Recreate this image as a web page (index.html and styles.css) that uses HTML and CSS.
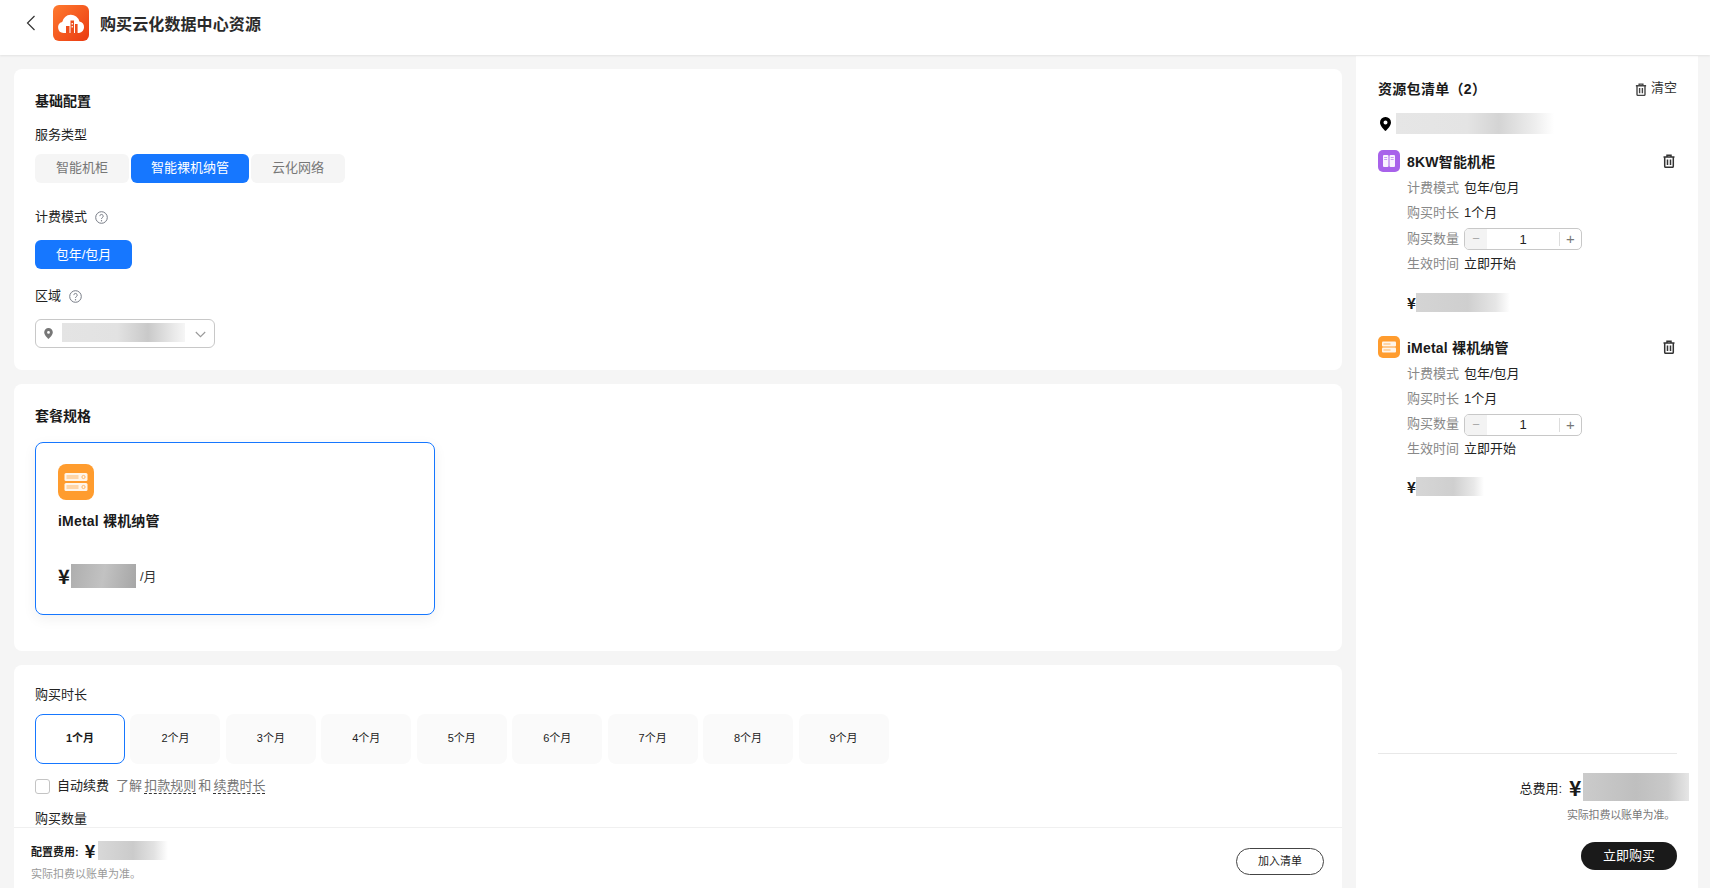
FILE: index.html
```html
<!DOCTYPE html>
<html lang="zh-CN">
<head>
  <meta charset="UTF-8" />
  <title>购买云化数据中心资源</title>
  <link rel="stylesheet" href="styles.css">
</head>
<body>
  <header class="top-bar">
    <svg class="back-icon" width="10" height="16" viewBox="0 0 10 16"><path d="M8.500 1 1.500 8l7 7" fill="none" stroke="#333" stroke-width="1.200"/></svg>
    <svg class="logo" width="36" height="36" viewBox="0 0 36 36">
      <defs>
        <linearGradient id="logoBg" x1="0" y1="0" x2="1" y2="1">
          <stop offset="0" stop-color="#ff7a2e"/>
          <stop offset="1" stop-color="#ea3a12"/>
        </linearGradient>
      </defs>
      <rect width="36" height="36" rx="6" fill="url(#logoBg)"/>
      <path d="M10.500 28a5.600 5.600 0 0 1-1.300-11 8.800 8.800 0 0 1 17.200-.6A5.900 5.900 0 0 1 26 28z" fill="#fff"/>
      <path d="M13 28v-7h3.500v7zM17.500 28V15.500h3.500V28zM22 28v-9h2.600v9z" fill="#ee4d1c"/>
      <path d="M18.600 18h1.300v1.500h-1.300zM18.600 21h1.300v1.500h-1.300z" fill="#fff"/>
    </svg>
    <h1 class="page-title">购买云化数据中心资源</h1>
  </header>

  <div class="page-body">
    <div class="main-col">
      <div class="main-scroll">
        <section class="card card-base">
          <h2 class="card-title">基础配置</h2>
          <div class="field-label label-service">服务类型</div>
          <div class="seg-group">
            <div class="seg seg-cabinet">智能机柜</div>
            <div class="seg seg-metal active">智能裸机纳管</div>
            <div class="seg seg-network">云化网络</div>
          </div>
          <div class="field-label label-billing">计费模式
            <svg class="help-icon" width="13" height="13" viewBox="0 0 13 13"><circle cx="6.500" cy="6.500" r="5.800" fill="none" stroke="#777c86"/><path d="M4.800 5.100a1.700 1.700 0 1 1 2.600 1.500c-.6.400-.9.700-.9 1.400" fill="none" stroke="#777c86"/><circle cx="6.500" cy="9.700" r=".7" fill="#777c86"/></svg>
          </div>
          <div class="billing-btn">包年/包月</div>
          <div class="field-label label-region">区域
            <svg class="help-icon" width="13" height="13" viewBox="0 0 13 13"><circle cx="6.500" cy="6.500" r="5.800" fill="none" stroke="#777c86"/><path d="M4.800 5.100a1.700 1.700 0 1 1 2.600 1.500c-.6.400-.9.700-.9 1.400" fill="none" stroke="#777c86"/><circle cx="6.500" cy="9.700" r=".7" fill="#777c86"/></svg>
          </div>
          <div class="region-select">
            <svg class="select-pin" width="9" height="11" viewBox="0 0 9 11"><path fill-rule="evenodd" d="M4.500 0a4.300 4.300 0 0 1 4.300 4.300c0 2.700-3 5.600-4.300 6.700C3.200 9.900.2 7 .2 4.300A4.300 4.300 0 0 1 4.500 0zm0 3a1.400 1.400 0 1 0 0 2.800 1.400 1.400 0 0 0 0-2.800z" fill="#777"/></svg>
            <div class="blur blur-region"></div>
            <svg class="select-arrow" width="11" height="7" viewBox="0 0 11 7"><path d="m.8 1 4.700 4.700L10.200 1" fill="none" stroke="#999" stroke-width="1.100"/></svg>
          </div>
        </section>

        <section class="card card-plan">
          <h2 class="card-title">套餐规格</h2>
          <div class="plan-item">
            <svg class="plan-icon" width="36" height="36" viewBox="0 0 36 36">
              <rect width="36" height="36" rx="8" fill="#ff9c2e"/>
              <rect x="6.500" y="9" width="23" height="8" rx="1.500" fill="#fff" fill-opacity=".9"/>
              <rect x="6.500" y="19" width="23" height="8" rx="1.500" fill="#fff" fill-opacity=".9"/>
              <path d="M8.500 12h12M8.500 14h12M8.500 22h12M8.500 24h12" stroke="#ffb565" stroke-width="1"/>
              <circle cx="25.500" cy="13" r="1.600" fill="none" stroke="#ffb565"/>
              <circle cx="25.500" cy="23" r="1.600" fill="none" stroke="#ffb565"/>
            </svg>
            <div class="plan-name">iMetal 裸机纳管</div>
            <div class="plan-price">
              <span class="yen yen-big">¥</span>
              <div class="blur blur-plan"></div>
              <span class="per-month">/月</span>
            </div>
          </div>
        </section>

        <section class="card card-duration">
          <div class="field-label">购买时长</div>
          <div class="month-list">
            <div class="month active">1个月</div>
            <div class="month">2个月</div>
            <div class="month">3个月</div>
            <div class="month">4个月</div>
            <div class="month">5个月</div>
            <div class="month">6个月</div>
            <div class="month">7个月</div>
            <div class="month">8个月</div>
            <div class="month">9个月</div>
          </div>
          <div class="renew-row">
            <span class="checkbox"></span>
            <span class="renew-text">自动续费</span>
            <span class="renew-tip">了解 <span class="dash-link">扣款规则</span> 和 <span class="dash-link">续费时长</span></span>
          </div>
          <div class="field-label label-qty">购买数量</div>
        </section>
      </div>

      <footer class="config-bar">
        <div>
          <div class="config-cost">
            <span class="config-label">配置费用:</span>
            <span class="yen yen-mid">¥</span>
            <div class="blur blur-config"></div>
          </div>
          <div class="config-note">实际扣费以账单为准。</div>
        </div>
        <div class="add-btn">加入清单</div>
      </footer>
    </div>

    <aside class="cart">
      <div class="cart-head">
        <span class="cart-title">资源包清单（2）</span>
        <span class="cart-clear">
          <svg class="trash" width="12" height="13" viewBox="0 0 12 14"><path d="M.5 3h11M4 3V1.200h4V3M1.700 3v9.300c0 .6.400 1 1 1h6.600c.6 0 1-.4 1-1V3M4.500 5.500v5.500M7.500 5.500v5.500" fill="none" stroke="#444" stroke-width="1.500"/></svg>
          <span class="clear-text">清空</span>
        </span>
      </div>
      <div class="cart-region">
        <svg width="11" height="14" viewBox="0 0 11 14"><path fill-rule="evenodd" d="M5.500 0A5.400 5.400 0 0 1 11 5.400C11 8.800 7.200 12.500 5.500 14 3.800 12.500 0 8.800 0 5.400A5.400 5.400 0 0 1 5.500 0zm0 3.500a2 2 0 1 0 0 4 2 2 0 0 0 0-4z" fill="#000"/></svg>
        <div class="blur blur-cart-region"></div>
      </div>

      <div class="cart-item">
        <div class="item-head">
          <svg width="22" height="22" viewBox="0 0 22 22">
            <rect width="22" height="22" rx="5" fill="#a862ea"/>
            <rect x="5" y="5" width="5.500" height="12" rx="1" fill="#fff" fill-opacity=".92"/>
            <rect x="11.500" y="5" width="5.500" height="12" rx="1" fill="#fff" fill-opacity=".92"/>
            <path d="M6.200 7.500h3M6.200 9.500h3M12.700 7.500h3M12.700 9.500h3" stroke="#c79bf2"/>
          </svg>
          <span class="item-name">8KW智能机柜</span>
          <svg class="item-del" width="12" height="14" viewBox="0 0 12 14"><path d="M.5 3h11M4 3V1.200h4V3M1.700 3v9.300c0 .6.400 1 1 1h6.600c.6 0 1-.4 1-1V3M4.500 5.500v5.500M7.500 5.500v5.500" fill="none" stroke="#333" stroke-width="1.500"/></svg>
        </div>
        <div class="item-row"><span class="item-key">计费模式</span><span>包年/包月</span></div>
        <div class="item-row"><span class="item-key">购买时长</span><span>1个月</span></div>
        <div class="item-row"><span class="item-key">购买数量</span>
          <div class="stepper"><span class="step-minus">−</span><span class="step-num">1</span><span class="step-plus">+</span></div>
        </div>
        <div class="item-row"><span class="item-key">生效时间</span><span>立即开始</span></div>
        <div class="item-price"><span class="yen yen-small">¥</span><div class="blur blur-item-a"></div></div>
      </div>

      <div class="cart-item">
        <div class="item-head">
          <svg width="22" height="22" viewBox="0 0 22 22">
            <rect width="22" height="22" rx="5" fill="#ff9c2e"/>
            <rect x="4" y="5.500" width="14" height="5" rx="1" fill="#fff" fill-opacity=".9"/>
            <rect x="4" y="11.500" width="14" height="5" rx="1" fill="#fff" fill-opacity=".9"/>
            <path d="M5.500 8h7M5.500 14h7" stroke="#ffb565"/>
          </svg>
          <span class="item-name">iMetal 裸机纳管</span>
          <svg class="item-del" width="12" height="14" viewBox="0 0 12 14"><path d="M.5 3h11M4 3V1.200h4V3M1.700 3v9.300c0 .6.400 1 1 1h6.600c.6 0 1-.4 1-1V3M4.500 5.500v5.500M7.500 5.500v5.500" fill="none" stroke="#333" stroke-width="1.500"/></svg>
        </div>
        <div class="item-row"><span class="item-key">计费模式</span><span>包年/包月</span></div>
        <div class="item-row"><span class="item-key">购买时长</span><span>1个月</span></div>
        <div class="item-row"><span class="item-key">购买数量</span>
          <div class="stepper"><span class="step-minus">−</span><span class="step-num">1</span><span class="step-plus">+</span></div>
        </div>
        <div class="item-row"><span class="item-key">生效时间</span><span>立即开始</span></div>
        <div class="item-price"><span class="yen yen-small">¥</span><div class="blur blur-item-b"></div></div>
      </div>

      <div class="cart-total">
        <div class="total-row">
          <span class="total-label">总费用:</span>
          <span class="yen yen-large">¥</span>
          <div class="blur blur-total"></div>
        </div>
        <div class="total-note">实际扣费以账单为准。</div>
        <div class="buy-btn">立即购买</div>
      </div>
    </aside>
  </div>
</body>
</html>
```

FILE: styles.css
```css
* {
  box-sizing: border-box;
}

html, body {
  height: 100%;
}

body {
  margin: 0;
  display: flex;
  flex-direction: column;
  overflow: hidden;
  background: #f5f5f5;
  color: #1a1a1a;
  font-family: "Liberation Sans", "Noto Sans CJK SC", sans-serif;
  font-size: 13px;
}

/* top bar */
.top-bar {
  flex: none;
  height: 55px;
  display: flex;
  align-items: center;
  padding: 0 0 9px 26px;
  background: white;
  box-shadow: 0 1px 2px rgba(0,0,0,0.08);
  position: relative;
}

.back-icon {
  margin-right: 17px;
}

.logo {
  margin-right: 11px;
}

.page-title {
  margin: 0;
  font-size: 16px;
  font-weight: 700;
  letter-spacing: .1px;
  color: #2a2a2a;
}

.page-body {
  flex: 1;
  min-height: 0;
  display: flex;
  padding-left: 14px;
}

/* left column */
.main-col {
  width: 1328px;
  display: flex;
  flex-direction: column;
}

.main-scroll {
  flex: 1;
  min-height: 0;
  overflow: hidden;
  padding-top: 14px;
}

.card {
  background: white;
  border-radius: 8px;
  padding: 22px 21px;
  margin-bottom: 14px;
}

.card-title {
  margin: 0;
  font-size: 14px;
  line-height: 20px;
  font-weight: 700;
}

.field-label {
  display: flex;
  align-items: center;
  line-height: 20px;
  color: #222;
}

.help-icon {
  margin-left: 8px;
}

.label-service {
  margin-top: 14px;
}

.seg-group {
  display: flex;
  gap: 2px;
  margin-top: 9px;
}

.seg {
  height: 29px;
  line-height: 28px;
  text-align: center;
  border-radius: 6px;
  background: #f5f5f5;
  color: #777;
}

.seg-cabinet, .seg-network {
  width: 94px;
}

.seg-metal {
  width: 118px;
}

.seg.active {
  background: #1677ff;
  color: white;
}

.label-billing {
  margin-top: 24px;
}

.billing-btn {
  width: 97px;
  height: 29px;
  line-height: 29px;
  margin-top: 13px;
  text-align: center;
  border-radius: 6px;
  background: #1677ff;
  color: white;
}

.label-region {
  margin-top: 17px;
}

.region-select {
  width: 180px;
  height: 29px;
  margin-top: 13px;
  display: flex;
  align-items: center;
  padding: 0 8px 2px 8px;
  border: 1px solid #c8c8c8;
  border-radius: 6px;
}

.select-pin {
  flex: none;
  margin: 2px 9px 0 0;
}

.select-arrow {
  flex: none;
  margin: 4px 0 0 auto;
}

.blur-region {
  width: 123px;
  height: 19px;
  background: linear-gradient(90deg, #e4e4e4, #e2e2e2 45%, #c9c9c9 70%, #e8e8e8 90%, #f6f6f6);
}

.blur {
  flex: none;
}

.yen {
  font-family: "Noto Sans CJK SC", sans-serif;
  font-weight: 700;
}

/* plan */
.card-plan {
  padding-bottom: 36px;
}

.plan-item {
  width: 400px;
  height: 173px;
  margin-top: 16px;
  padding: 21px 22px;
  border: 1px solid #1677ff;
  border-radius: 8px;
  box-shadow: 0 4px 14px rgba(0,0,0,0.06);
}

.plan-icon {
  display: block;
}

.plan-name {
  margin-top: 11px;
  line-height: 20px;
  font-size: 14px;
  font-weight: 700;
  letter-spacing: .2px;
}

.plan-price {
  display: flex;
  align-items: center;
  margin-top: 33px;
}

.yen-big {
  width: 13px;
  font-size: 20px;
  line-height: 24px;
}

.blur-plan {
  width: 65px;
  height: 24px;
  background: linear-gradient(100deg, #aeaeae, #c2c2c2 50%, #a6a6a6);
}

.per-month {
  margin: -1px 0 0 4px;
  color: #333;
}

/* duration */
.card-duration {
  padding-top: 20px;
  padding-bottom: 60px;
}

.month-list {
  display: flex;
  gap: 5.45px;
  margin-top: 9px;
}

.month {
  width: 90px;
  height: 50px;
  line-height: 47px;
  text-align: center;
  font-size: 11px;
  border-radius: 8px;
  border: 1px solid transparent;
  background: #fafafa;
  color: #222;
}

.month.active {
  background: white;
  border-color: #1677ff;
  font-weight: 700;
  color: #1a1a1a;
}

.renew-row {
  display: flex;
  align-items: center;
  margin-top: 12px;
  line-height: 20px;
}

.checkbox {
  width: 15px;
  height: 15px;
  margin-right: 7px;
  border: 1px solid #c4c4c4;
  border-radius: 3px;
}

.renew-text {
  color: #222;
}

.renew-tip {
  margin-left: 7px;
  word-spacing: -1.500px;
  color: #777;
}

.dash-link {
  border-bottom: 1px dashed #333;
}

.label-qty {
  margin-top: 13px;
}

/* bottom of left column */
.config-bar {
  flex: none;
  height: 61px;
  display: flex;
  align-items: center;
  justify-content: space-between;
  padding: 6px 18px 0 17px;
  background: white;
  border-top: 1px solid #f0f0f0;
}

.config-cost {
  display: flex;
  align-items: center;
  height: 20px;
}

.config-label {
  font-size: 11px;
  font-weight: 700;
  margin: 2px 6px 0 0;
}

.yen-mid {
  width: 13px;
  font-size: 18px;
  line-height: 20px;
}

.blur-config {
  width: 70px;
  height: 19px;
  background: linear-gradient(90deg, #d8d8d8, #cbcbcb 50%, #e2e2e2 80%, #fff);
}

.config-note {
  margin-top: 6px;
  font-size: 11px;
  line-height: 16px;
  color: #999;
}

.add-btn {
  width: 88px;
  height: 27px;
  line-height: 25px;
  text-align: center;
  font-size: 11px;
  border: 1px solid #444;
  border-radius: 14px;
  color: #222;
}

/* right column */
.cart {
  width: 342px;
  margin: 1px 0 0 14px;
  padding: 0 21px 18px 22px;
  background: white;
  display: flex;
  flex-direction: column;
}

.cart-head {
  display: flex;
  align-items: center;
  justify-content: space-between;
  margin-top: 22px;
  height: 20px;
}

.cart-title {
  font-size: 14px;
  font-weight: 700;
  letter-spacing: .3px;
}

.cart-clear {
  display: flex;
  align-items: center;
  gap: 4px;
  color: #333;
}

.trash {
  margin-top: 3px;
}

.clear-text {
  margin-bottom: 3px;
}

.cart-region {
  display: flex;
  align-items: center;
  gap: 5px;
  margin-top: 15px;
  padding-left: 2px;
}

.blur-cart-region {
  width: 158px;
  height: 21px;
  background: linear-gradient(90deg, #e6e6e6, #e4e4e4 45%, #d4d4d4 65%, #eeeeee 88%, #fff);
}

.cart-item {
  height: 186px;
}

.cart-region + .cart-item {
  margin-top: 16px;
}

.item-head {
  display: flex;
  align-items: center;
  gap: 7px;
  height: 22px;
}

.item-name {
  font-size: 14px;
  font-weight: 700;
  letter-spacing: .2px;
}

.item-del {
  margin-left: auto;
  margin-right: 2px;
}

.item-row {
  display: flex;
  align-items: center;
  height: 25px;
  padding-left: 29px;
  color: #222;
}

.item-row:nth-child(2) {
  margin-top: 2px;
}

.cart-region + .cart-item .item-row:nth-child(4) {
  height: 26px;
}

.cart-region + .cart-item .item-price {
  margin-top: 18px;
}

.item-key {
  width: 57px;
  flex: none;
  color: #888;
}

.stepper {
  width: 118px;
  height: 22px;
  margin-top: 4px;
  display: flex;
  align-items: center;
  border: 1px solid #c8c8c8;
  border-radius: 5px;
  overflow: hidden;
}

.step-minus {
  width: 22px;
  height: 100%;
  line-height: 20px;
  text-align: center;
  background: #f3f3f3;
  color: #aaa;
}

.step-num {
  flex: 1;
  text-align: center;
  font-weight: 500;
  color: #222;
}

.step-plus {
  width: 22px;
  height: 14px;
  line-height: 14px;
  text-align: center;
  font-size: 15px;
  font-weight: 300;
  border-left: 1px solid #ddd;
  color: #777;
}

.item-price {
  display: flex;
  align-items: center;
  margin-top: 17px;
  padding-left: 29px;
}

.yen-small {
  width: 9px;
  font-size: 15px;
  line-height: 19px;
}

.blur-item-a {
  width: 94px;
  height: 19px;
  background: linear-gradient(90deg, #d4d4d4, #cfcfcf 55%, #e6e6e6 85%, #fff);
}

.blur-item-b {
  width: 68px;
  height: 19px;
  background: linear-gradient(90deg, #d6d6d6, #cfcfcf 55%, #e8e8e8 85%, #fff);
}

.cart-total {
  margin-top: auto;
  padding-top: 19px;
  border-top: 1px solid #e8e8e8;
  display: flex;
  flex-direction: column;
  align-items: flex-end;
}

.total-row {
  display: flex;
  align-items: center;
  margin-right: -12px;
}

.total-label {
  margin: 1px 7px 0 0;
  color: #222;
}

.yen-large {
  width: 14px;
  font-size: 21px;
  line-height: 28px;
}

.blur-total {
  width: 106px;
  height: 28px;
  background: linear-gradient(90deg, #cbcbcb, #bfbfbf 50%, #c9c9c9 80%, #e6e6e6);
}

.total-note {
  margin-top: 6px;
  margin-right: 2px;
  font-size: 11px;
  line-height: 16px;
  letter-spacing: -.2px;
  color: #777;
}

.buy-btn {
  width: 96px;
  height: 28px;
  line-height: 28px;
  margin-top: 19px;
  text-align: center;
  border-radius: 14px;
  background: #1a1a1a;
  color: white;
}
```
